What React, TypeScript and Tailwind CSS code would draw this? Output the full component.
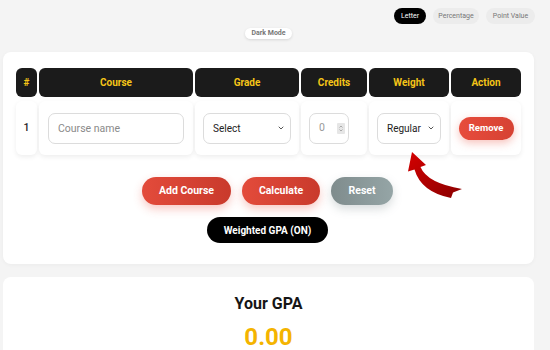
import { ChevronDown } from "lucide-react";

const HEADERS = ["#", "Course", "Grade", "Credits", "Weight", "Action"];
const GRID = "grid grid-cols-[21px_154px_104px_66px_80px_70px] gap-x-[2px]";

function Arrow() {
  return (
    <svg
      viewBox="0 0 70 50"
      className="absolute left-[397px] top-[96px] w-[70px] h-[50px]"
    >
      <defs>
        <linearGradient id="arr" x1="0" y1="0" x2="1" y2="1">
          <stop offset="0" stopColor="#d40000" />
          <stop offset="1" stopColor="#8a0000" />
        </linearGradient>
      </defs>
      <path
        d="M12 4 L26 17 L20.5 19 Q27 35 62 41 L53 44.5 L51 50 Q21 44 14.5 21.5 L8 23.5 Z"
        fill="url(#arr)"
      />
    </svg>
  );
}

function FakeSelect({ label, className }: { label: string; className: string }) {
  return (
    <div
      className={`h-[31px] rounded-[7px] border border-[#dcdcdc] bg-white flex items-center justify-between pl-[9px] pr-[5px] text-[10px] text-[#222] ${className}`}
    >
      <span>{label}</span>
      <ChevronDown size={8} strokeWidth={2.5} className="text-[#333]" />
    </div>
  );
}

export default function App() {
  return (
    <div
      className="w-[550px] h-[350px] overflow-hidden bg-[#f4f4f4] relative"
      style={{ fontFamily: "Roboto, 'Liberation Sans', sans-serif" }}
    >
      {/* Modo de nota */}
      <div className="flex justify-end gap-[7px] pr-[15px] pt-[8px]">
        <span className="w-[32px] h-[16px] rounded-full bg-black text-white text-[7px] flex items-center justify-center">
          Letter
        </span>
        <span className="w-[46px] h-[16px] rounded-full bg-[#ececec] text-[#777] text-[7px] flex items-center justify-center">
          Percentage
        </span>
        <span className="w-[49px] h-[16px] rounded-full bg-[#ececec] text-[#777] text-[7px] flex items-center justify-center">
          Point Value
        </span>
      </div>
      <div className="flex justify-center pr-[13px] mt-[4px]">
        <span className="h-[11px] px-[6px] rounded-full bg-white shadow-[0_1px_3px_rgba(0,0,0,0.12)] text-[#777] font-bold text-[7px] flex items-center">
          Dark Mode
        </span>
      </div>

      {/* Tabela de cursos */}
      <div className="relative mt-[13px] ml-[3px] w-[531px] bg-white rounded-[8px] px-[13px] pt-[16px] pb-[21px] shadow-[0_1px_4px_rgba(0,0,0,0.04)]">
        <div className={GRID}>
          {HEADERS.map((h) => (
            <div
              key={h}
              className="h-[29px] bg-[#1b1b1b] rounded-[6px] flex items-center justify-center text-[#f5c518] font-bold text-[10px]"
            >
              {h}
            </div>
          ))}
        </div>
        <div className={`${GRID} mt-[4px]`}>
          <div className="h-[54px] bg-white rounded-[6px] shadow-[0_2px_5px_rgba(0,0,0,0.07)] flex items-center justify-center text-[10.5px] font-medium text-[#222]">
            1
          </div>
          <div className="h-[54px] bg-white rounded-[6px] shadow-[0_2px_5px_rgba(0,0,0,0.07)] flex items-center px-[9px]">
            <input
              placeholder="Course name"
              className="w-full h-[31px] rounded-[7px] border border-[#dcdcdc] bg-white px-[9px] text-[10.5px] outline-none placeholder-[#8a8a8a]"
            />
          </div>
          <div className="h-[54px] bg-white rounded-[6px] shadow-[0_2px_5px_rgba(0,0,0,0.07)] flex items-center px-[8px]">
            <FakeSelect label="Select" className="w-full" />
          </div>
          <div className="h-[54px] bg-white rounded-[6px] shadow-[0_2px_5px_rgba(0,0,0,0.07)] flex items-center px-[8px]">
            <div className="w-[40px] h-[31px] rounded-[7px] border border-[#dcdcdc] bg-white flex items-center justify-between pl-[9px] pr-[3px] text-[10.5px] text-[#999]">
              <span>0</span>
              <span className="w-[8px] h-[11px] bg-[#e6e6e6] rounded-[1px] flex flex-col items-center justify-center">
                <svg viewBox="0 0 8 11" className="w-[8px] h-[11px]">
                  <path d="M2.5 4.5 L4 3 L5.5 4.5 M2.5 6.5 L4 8 L5.5 6.5" stroke="#999" strokeWidth="0.8" fill="none" />
                </svg>
              </span>
            </div>
          </div>
          <div className="h-[54px] bg-white rounded-[6px] shadow-[0_2px_5px_rgba(0,0,0,0.07)] flex items-center px-[8px]">
            <FakeSelect label="Regular" className="w-[64px]" />
          </div>
          <div className="h-[54px] bg-white rounded-[6px] shadow-[0_2px_5px_rgba(0,0,0,0.07)] flex items-center justify-center">
            <button className="w-[55px] h-[23px] rounded-full bg-gradient-to-r from-[#e74c3c] to-[#d64233] text-white font-bold text-[9.5px] shadow-[0_3px_8px_rgba(231,76,60,0.35)]">
              Remove
            </button>
          </div>
        </div>

        <div className="flex justify-center gap-[11px] mt-[22px] pr-[2px]">
          <button className="w-[89px] h-[28px] rounded-full bg-gradient-to-r from-[#e34b3b] to-[#c93a2c] text-white font-bold text-[10.5px] shadow-[0_4px_10px_rgba(231,76,60,0.3)]">
            Add Course
          </button>
          <button className="w-[78px] h-[28px] rounded-full bg-gradient-to-r from-[#e34b3b] to-[#c93a2c] text-white font-bold text-[10.5px] shadow-[0_4px_10px_rgba(231,76,60,0.3)]">
            Calculate
          </button>
          <button className="w-[62px] h-[28px] rounded-full bg-gradient-to-r from-[#7f8c8d] to-[#95a5a6] text-white font-bold text-[10.5px] shadow-[0_4px_10px_rgba(127,140,141,0.3)]">
            Reset
          </button>
        </div>
        <div className="flex justify-center mt-[12px] pr-[2px]">
          <button className="w-[121px] h-[26px] rounded-full bg-black text-white font-bold text-[10px]">
            Weighted GPA (ON)
          </button>
        </div>

        <Arrow />
      </div>

      {/* Resultado */}
      <div className="mt-[13px] ml-[3px] w-[531px] h-[73px] bg-white rounded-t-[8px] pt-[17px] flex flex-col items-center">
        <div className="text-[16px] font-bold text-[#161616] leading-[20px]">Your GPA</div>
        <div className="text-[24px] font-bold text-[#f4b400] leading-[20px] mt-[13px]">0.00</div>
      </div>
    </div>
  );
}
